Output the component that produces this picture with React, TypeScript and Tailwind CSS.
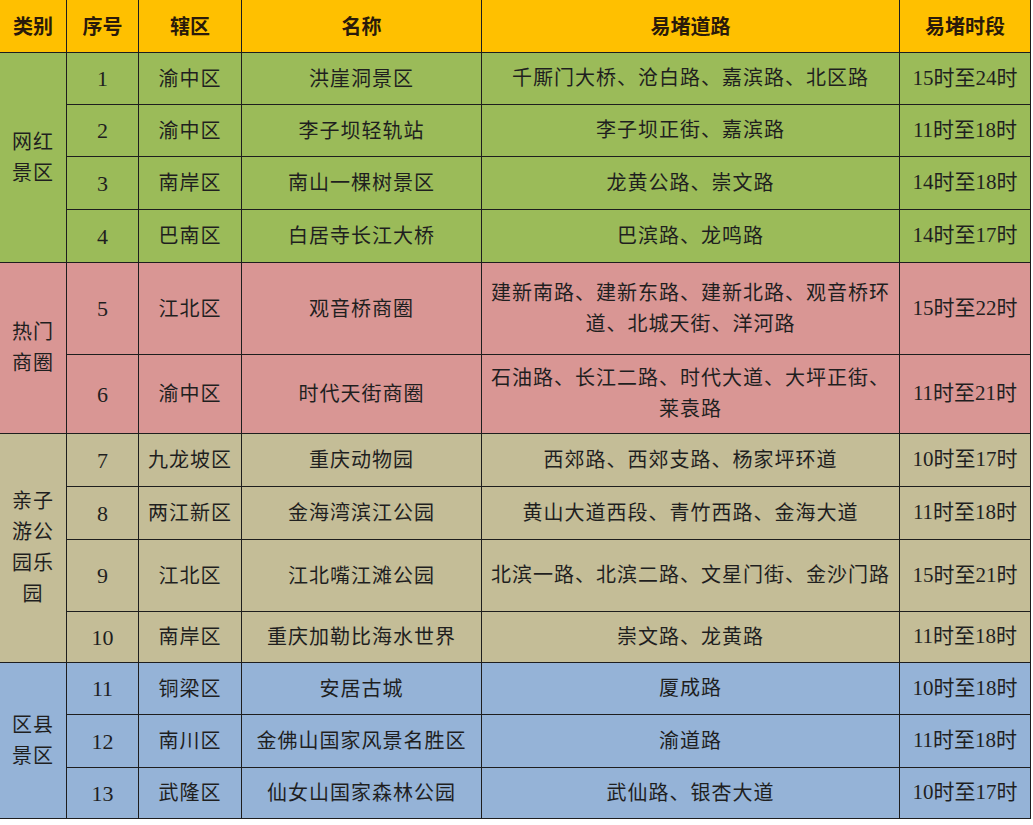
import React from "react";

type Row = {
  no: string;
  district: string;
  name: string;
  roads: React.ReactNode;
  time: string;
  h: string;
};

type Group = {
  label: string;
  bg: string;
  rows: Row[];
};

const groups: Group[] = [
  {
    label: "网红景区",
    bg: "bg-[#9bbb59]",
    rows: [
      { no: "1", district: "渝中区", name: "洪崖洞景区", roads: "千厮门大桥、沧白路、嘉滨路、北区路", time: "15时至24时", h: "h-[52px]" },
      { no: "2", district: "渝中区", name: "李子坝轻轨站", roads: "李子坝正街、嘉滨路", time: "11时至18时", h: "h-[52px]" },
      { no: "3", district: "南岸区", name: "南山一棵树景区", roads: "龙黄公路、崇文路", time: "14时至18时", h: "h-[53px]" },
      { no: "4", district: "巴南区", name: "白居寺长江大桥", roads: "巴滨路、龙鸣路", time: "14时至17时", h: "h-[53px]" },
    ],
  },
  {
    label: "热门商圈",
    bg: "bg-[#d99694]",
    rows: [
      {
        no: "5",
        district: "江北区",
        name: "观音桥商圈",
        roads: (
          <>
            建新南路、建新东路、建新北路、观音桥环
            <br />
            道、北城天街、洋河路
          </>
        ),
        time: "15时至22时",
        h: "h-[92px]",
      },
      {
        no: "6",
        district: "渝中区",
        name: "时代天街商圈",
        roads: (
          <>
            石油路、长江二路、时代大道、大坪正街、
            <br />
            莱袁路
          </>
        ),
        time: "11时至21时",
        h: "h-[79px]",
      },
    ],
  },
  {
    label: "亲子游公园乐园",
    bg: "bg-[#c4bd97]",
    rows: [
      { no: "7", district: "九龙坡区", name: "重庆动物园", roads: "西郊路、西郊支路、杨家坪环道", time: "10时至17时", h: "h-[53px]" },
      { no: "8", district: "两江新区", name: "金海湾滨江公园", roads: "黄山大道西段、青竹西路、金海大道", time: "11时至18时", h: "h-[53px]" },
      { no: "9", district: "江北区", name: "江北嘴江滩公园", roads: "北滨一路、北滨二路、文星门街、金沙门路", time: "15时至21时", h: "h-[72px]" },
      { no: "10", district: "南岸区", name: "重庆加勒比海水世界", roads: "崇文路、龙黄路", time: "11时至18时", h: "h-[51px]" },
    ],
  },
  {
    label: "区县景区",
    bg: "bg-[#95b3d7]",
    rows: [
      { no: "11", district: "铜梁区", name: "安居古城", roads: "厦成路", time: "10时至18时", h: "h-[52px]" },
      { no: "12", district: "南川区", name: "金佛山国家风景名胜区", roads: "渝道路", time: "11时至18时", h: "h-[53px]" },
      { no: "13", district: "武隆区", name: "仙女山国家森林公园", roads: "武仙路、银杏大道", time: "10时至17时", h: "h-[51px]" },
    ],
  },
];

const cell = "border-[1.5px] border-[#1e1e1e] text-center align-middle p-0";
const body = "font-['Liberation_Serif','Noto_Sans_CJK_SC',serif] text-[20px] tracking-[1px] text-[#1f1f1f]";

export default function App() {
  return (
    <div className="w-[1033px] h-[825px] bg-white overflow-hidden">
      <table className="table-fixed border-collapse w-[1031px] -mt-px -ml-px">
        <colgroup>
          <col className="w-[67px]" />
          <col className="w-[72px]" />
          <col className="w-[103px]" />
          <col className="w-[240px]" />
          <col className="w-[418px]" />
          <col className="w-[131px]" />
        </colgroup>
        <thead>
          <tr className="h-[53px] bg-[#ffc000] font-['Noto_Sans_CJK_SC',sans-serif] text-[20px] font-bold text-[#2a1a0a]">
            <th className={cell}>类别</th>
            <th className={cell}>序号</th>
            <th className={cell}>辖区</th>
            <th className={cell}>名称</th>
            <th className={cell}>易堵道路</th>
            <th className={cell}>易堵时段</th>
          </tr>
        </thead>
        <tbody className={body}>
          {groups.map((g) =>
            g.rows.map((r, i) => (
              <tr key={r.no} className={`${g.bg} ${r.h}`}>
                {i === 0 && (
                  <td rowSpan={g.rows.length} className={cell}>
                    <div className="mx-auto w-[44px] leading-[31px] text-center">
                      {g.label}
                    </div>
                  </td>
                )}
                <td className={`${cell} tracking-normal text-[22px]`}>{r.no}</td>
                <td className={cell}>{r.district}</td>
                <td className={cell}>{r.name}</td>
                <td className={`${cell} leading-[31px] px-1`}>{r.roads}</td>
                <td className={`${cell} tracking-normal text-[21px]`}>{r.time}</td>
              </tr>
            ))
          )}
        </tbody>
      </table>
    </div>
  );
}
